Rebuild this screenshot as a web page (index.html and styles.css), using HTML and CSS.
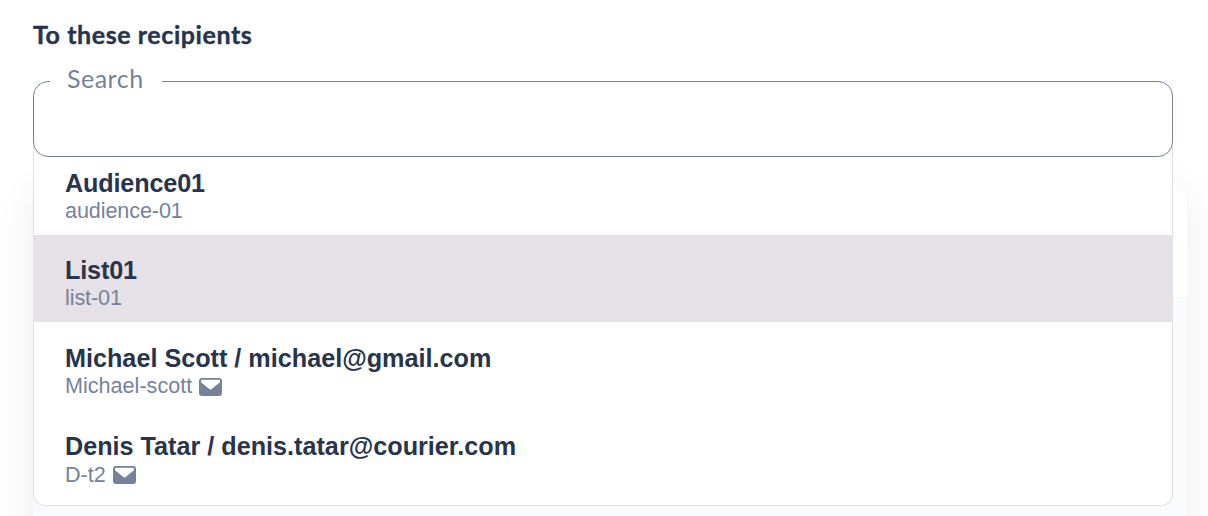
FILE: index.html
```html
<!DOCTYPE html>
<html lang="en">
<head>
<meta charset="utf-8">
<title>Recipients</title>
<link rel="stylesheet" href="styles.css">
</head>
<body>
<main class="page">
  <h2 class="heading">To these recipients</h2>
  <div class="picker">
    <fieldset class="search"><legend class="search-label">Search</legend></fieldset>
    <ul class="menu">
      <li class="option"><div class="name">Audience01</div><div class="detail"><span>audience-01</span></div></li>
      <li class="option active"><div class="name">List01</div><div class="detail"><span>list-01</span></div></li>
      <li class="option contact"><div class="name">Michael Scott / michael@gmail.com</div><div class="detail"><span>Michael-scott</span><svg class="mail" viewBox="0 0 23 18"><path fill-rule="evenodd" d="M3 0H20Q23 0 23 3V15Q23 18 20 18H3Q0 18 0 15V3Q0 0 3 0ZM3.4 1.8Q2 1.8 2 3V4.2L10.7 11.3Q11.5 11.9 12.3 11.3L21 4.2V3Q21 1.8 19.6 1.8Z"/></svg></div></li>
      <li class="option contact"><div class="name">Denis Tatar / denis.tatar@courier.com</div><div class="detail last"><span>D-t2</span><svg class="mail" viewBox="0 0 23 18"><path fill-rule="evenodd" d="M3 0H20Q23 0 23 3V15Q23 18 20 18H3Q0 18 0 15V3Q0 0 3 0ZM3.4 1.8Q2 1.8 2 3V4.2L10.7 11.3Q11.5 11.9 12.3 11.3L21 4.2V3Q21 1.8 19.6 1.8Z"/></svg></div></li>
    </ul>
  </div>
  <section class="card"><div class="card-head"></div></section>
</main>
</body>
</html>
```
FILE: styles.css
```css
* { box-sizing: border-box; }
body { margin: 0; background: #fff; font-family: "Liberation Sans", Arial, sans-serif; }
.page { height: 516px; padding: 0 21px 0 33px; overflow: hidden; display: flex; flex-direction: column; }
.heading { flex: none; margin: 0; height: 69px; padding-top: 16px; font: 700 25px/36px Lato, sans-serif; color: #28344c; letter-spacing: 0.58px; -webkit-text-stroke: 0.4px #28344c; }
.picker { flex: none; position: relative; width: 1140px; height: 88px; z-index: 1; }
.search { position: relative; z-index: 2; margin: 0; min-width: 0; height: 88px; padding: 0 0 0 16px; border: 1px solid #76829c; border-radius: 15px; }
.search-label { height: 25px; padding: 0 18px 0 17px; width: 112px; font: 400 25px/19px Lato, sans-serif; letter-spacing: 0.5px; color: #76829c; }
.menu { position: absolute; z-index: 1; left: 0; top: 78px; width: 1140px; height: 359px; margin: 0; padding: 1px 0 0; list-style: none; background: #fff; border: 1px solid #e3dfe5; border-top: 0; border-radius: 0 0 12px 12px; }
.option { height: 87px; padding: 21px 31px 0; }
.option.active { background: #e6e0e7; }
.option.contact { height: 88px; padding-top: 22px; }
.name { font-weight: 700; font-size: 25.2px; line-height: 29px; color: #28344c; }
.option:not(.contact) .name { letter-spacing: -0.15px; }
.option:not(.contact) .detail { letter-spacing: -0.1px; }
.detail { display: flex; gap: 7px; font-size: 21.6px; line-height: 25px; color: #76829c; }
.detail.last { padding-top: 1px; }
.mail { width: 23px; height: 18px; margin-top: 5px; fill: #76829c; }
.last .mail { margin-top: 4px; }
.card { width: 1154px; height: 500px; flex: none; margin-top: 31px; border-radius: 14px; background: #f8fafc; box-shadow: 0 6px 42px rgba(0, 0, 0, 0.08); }
.card-head { height: 109px; background: #fff; border-radius: 14px 14px 0 0; }
```
